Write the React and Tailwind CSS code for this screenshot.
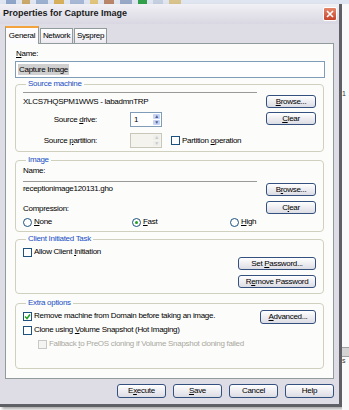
import React from "react";

const U = ({ children }) => <span className="underline underline-offset-1">{children}</span>;

const Button = ({ children, className = "" }) => (
  <button
    className={`h-[13px] rounded-[3px] border border-[#34507e] bg-gradient-to-b from-white to-[#dcdce4] leading-none text-black flex items-center justify-center ${className}`}
  >
    <span className="whitespace-pre">{children}</span>
  </button>
);

const Check = ({ checked = false, disabled = false }) => (
  <span
    className={`w-[9px] h-[9px] border flex items-center justify-center shrink-0 ${
      disabled ? "border-[#c8c8c8] bg-[#f4f4f0]" : "border-[#1c5180] bg-white"
    }`}
  >
    {checked && (
      <svg width="7" height="7" viewBox="0 0 7 7">
        <path d="M1 3.5 L3 5.5 L6 1.5" stroke="#21a121" strokeWidth="1.5" fill="none" />
      </svg>
    )}
  </span>
);

const Radio = ({ checked = false }) => (
  <span className="w-[9px] h-[9px] rounded-full border border-[#1c5180] bg-white flex items-center justify-center shrink-0">
    {checked && <span className="w-[3px] h-[3px] rounded-full bg-[#21a121]" />}
  </span>
);

const Spinner = ({ value = "", disabled = false }) => (
  <div
    className={`w-[32px] h-[15px] border flex items-stretch ${
      disabled ? "border-[#c9c7ba] bg-[#f4f3ee]" : "border-[#7f9db9] bg-white"
    }`}
  >
    <span className="flex-1 pl-[3px] leading-[13px]">{value}</span>
    <span className="w-[9px] flex flex-col gap-px p-px">
      <span
        className={`flex-1 rounded-[1px] flex items-center justify-center text-[5px] leading-none ${
          disabled ? "bg-[#eeeeea] text-[#c8c8c8]" : "bg-[#c6d3f7] text-[#4d6185]"
        }`}
      >
        ▲
      </span>
      <span
        className={`flex-1 rounded-[1px] flex items-center justify-center text-[5px] leading-none ${
          disabled ? "bg-[#eeeeea] text-[#c8c8c8]" : "bg-[#c6d3f7] text-[#4d6185]"
        }`}
      >
        ▼
      </span>
    </span>
  </div>
);

const Group = ({ title, className = "", children }) => (
  <fieldset className={`border border-[#d0d0bf] rounded-[4px] pl-[7px] pr-[7px] ${className}`}>
    <legend className="ml-[3px] px-[2px] leading-[10px] text-[#1a4fc4]">{title}</legend>
    {children}
  </fieldset>
);

const Field = ({ children }) => (
  <div className="w-[234px] h-[17px] border-t border-[#9a9a9a] pt-[2px] leading-[10px] whitespace-nowrap">
    {children}
  </div>
);

export default function App() {
  return (
    <div className="w-[349px] h-[410px] overflow-hidden bg-white flex flex-col font-['Liberation_Sans',Arial,sans-serif] text-[8px] tracking-[-0.3px] text-black">
      {/* desktop toolbar peeking out behind the dialog */}
      <div className="h-[4px] flex gap-[6px] bg-[#dfe6f2] px-[6px]">
        <span className="w-[10px] bg-[#8fa6c9]" />
        <span className="w-[8px] bg-[#c9a86a]" />
        <span className="w-[12px] bg-[#9cb0cf]" />
        <span className="w-[10px] bg-[#d8b05c]" />
        <span className="w-[14px] bg-[#a7b8d6]" />
        <span className="w-[8px] bg-[#e0c47a]" />
        <span className="w-[10px] bg-[#b9866a]" />
        <span className="w-[12px] bg-[#97a9c6]" />
        <span className="w-[9px] bg-[#31a04a]" />
        <span className="w-[10px] bg-[#c4cfe0]" />
        <span className="w-[12px] bg-[#d9c38d]" />
      </div>

      <div className="flex flex-1">
        {/* dialog window */}
        <div className="w-[342px] h-[403px] flex flex-col border-r-[3px] border-b-[3px] border-[#5f5f66] bg-[#dedde6] shadow-[2px_2px_3px_rgba(0,0,0,0.35)]">
          {/* title bar */}
          <div className="h-[20px] flex items-center justify-between pl-[3px] pr-[2px] bg-gradient-to-b from-[#f1f0f5] to-[#d9d8e2]">
            <span className="font-bold text-[9px] tracking-normal text-[#1b1b1b]">
              Properties for Capture Image
            </span>
            <span className="w-[14px] h-[14px] rounded-[2px] border border-white bg-gradient-to-b from-[#e4866a] to-[#c5442a] flex items-center justify-center">
              <svg width="8" height="8" viewBox="0 0 8 8">
                <path d="M1 1 L7 7 M7 1 L1 7" stroke="white" strokeWidth="1.6" />
              </svg>
            </span>
          </div>

          <div className="flex-1 flex flex-col px-[5px]">
            {/* tabs */}
            <div className="h-[19px] flex items-end gap-[1px] pt-[1px]">
              <div className="relative z-10 -mb-px h-[18px] w-[34px] border-x border-t-2 border-x-[#919b9c] border-t-[#f2a33b] bg-[#fcfcfe] flex items-center justify-center">
                General
              </div>
              <div className="h-[15px] w-[33px] border-x border-t border-[#919b9c] bg-gradient-to-b from-white to-[#eceaf0] flex items-center justify-center">
                Network
              </div>
              <div className="h-[15px] w-[33px] border-x border-t border-[#919b9c] bg-gradient-to-b from-white to-[#eceaf0] flex items-center justify-center">
                Sysprep
              </div>
            </div>

            {/* tab page */}
            <div className="h-[336px] border border-[#919b9c] bg-[#fcfcfb] px-[9px] flex flex-col">
              <div className="mt-[5px] leading-[10px] pl-[1px]">
                <U>N</U>ame:
              </div>
              <div className="mt-[2px] h-[17px] w-[310px] border border-[#7f9db9] bg-white flex items-center px-[2px]">
                <span className="bg-[#cfcfcf] px-[1px] leading-[11px]">Capture Image</span>
              </div>

              {/* Source machine */}
              <Group title="Source machine" className="mt-[1px] h-[73px]">
                <div className="flex justify-between items-start pt-[3px]">
                  <div className="flex flex-col">
                    <Field>
                      <span className="block pt-[2px]">XLCS7HQSPM1WWS - labadmnTRP</span>
                    </Field>
                    <div className="flex items-center h-[15px] mt-[3px]">
                      <span className="w-[74px] text-right">
                        Source <U>d</U>rive:
                      </span>
                      <span className="w-[33px]" />
                      <Spinner value="1" />
                    </div>
                    <div className="flex items-center h-[15px] mt-[6px]">
                      <span className="w-[74px] text-right">
                        Source <U>p</U>artition:
                      </span>
                      <span className="w-[33px]" />
                      <Spinner disabled />
                      <span className="ml-[9px] flex items-center gap-[2px]">
                        <Check />
                        <span>
                          Partition <U>o</U>peration
                        </span>
                      </span>
                    </div>
                  </div>
                  <div className="flex flex-col gap-[4px] mt-[3px]">
                    <Button className="w-[50px]">
                      <U>B</U>rowse...
                    </Button>
                    <Button className="w-[50px]">
                      <U>C</U>lear
                    </Button>
                  </div>
                </div>
              </Group>

              {/* Image */}
              <Group title="Image" className="mt-[3px] h-[77px]">
                <div className="flex justify-between items-start">
                  <div className="flex flex-col">
                    <div className="leading-[10px] mt-[1px]">Name:</div>
                    <div className="mt-[5px]">
                      <Field>receptionimage120131.gho</Field>
                    </div>
                    <div className="leading-[10px] mt-[6px]">Compression:</div>
                  </div>
                  <div className="flex flex-col gap-[5px] mt-[18px]">
                    <Button className="w-[50px]">
                      B<U>r</U>owse...
                    </Button>
                    <Button className="w-[50px]">
                      C<U>l</U>ear
                    </Button>
                  </div>
                </div>
                <div className="flex items-center h-[12px] mt-[2px]">
                  <span className="w-[109px] flex items-center gap-[2px]">
                    <Radio />
                    <span>
                      <U>N</U>one
                    </span>
                  </span>
                  <span className="w-[98px] flex items-center gap-[2px]">
                    <Radio checked />
                    <span>
                      <U>F</U>ast
                    </span>
                  </span>
                  <span className="flex items-center gap-[2px]">
                    <Radio />
                    <span>
                      <U>H</U>igh
                    </span>
                  </span>
                </div>
              </Group>

              {/* Client Initiated Task */}
              <Group title="Client Initiated Task" className="mt-[2px] h-[60px]">
                <div className="flex items-center gap-[2px] mt-[3px] leading-[10px]">
                  <Check />
                  <span>
                    Allow Client <U>I</U>nitiation
                  </span>
                </div>
                <div className="flex flex-col items-end gap-[5px]">
                  <Button className="w-[78px]">
                    Set <U>P</U>assword...
                  </Button>
                  <Button className="w-[78px]">
                    R<U>e</U>move Password
                  </Button>
                </div>
              </Group>

              {/* Extra options */}
              <Group title="Extra options" className="mt-[4px] h-[71px]">
                <div className="flex justify-between items-start">
                  <div className="flex flex-col gap-[4px] mt-[3px] whitespace-nowrap">
                    <div className="flex items-center gap-[2px] leading-[10px]">
                      <Check checked />
                      <span>Remove machine from Domain before taking an image.</span>
                    </div>
                    <div className="flex items-center gap-[2px] leading-[10px]">
                      <Check />
                      <span>
                        Clone using <U>V</U>olume Snapshot (Hot Imaging)
                      </span>
                    </div>
                    <div className="flex items-center gap-[2px] leading-[10px] pl-[15px] text-[#a9a99e]">
                      <Check disabled />
                      <span>
                        Fallback <U>t</U>o PreOS cloning if Volume Snapshot cloning failed
                      </span>
                    </div>
                  </div>
                  <Button className="w-[56px] h-[14px] mt-[2px]">
                    <U>A</U>dvanced...
                  </Button>
                </div>
              </Group>
            </div>

            {/* dialog buttons */}
            <div className="flex justify-end gap-[7px] mt-[5px]">
              <Button className="w-[49px] h-[14px]">
                E<U>x</U>ecute
              </Button>
              <Button className="w-[49px] h-[14px]">
                <U>S</U>ave
              </Button>
              <Button className="w-[49px] h-[14px]">Cancel</Button>
              <Button className="w-[49px] h-[14px]">Help</Button>
            </div>
          </div>
        </div>

        {/* desktop behind, right edge */}
        <div className="flex-1 flex flex-col bg-[#fafafa]">
          <div className="h-[86px]" />
          <span className="text-[7px] leading-[8px] text-[#333]">1</span>
          <div className="h-[249px]" />
          <div className="h-[10px] bg-[#d4d4d4] border-y border-[#a0a0a0]" />
          <span className="text-[7px] leading-[8px] text-[#333]">s</span>
        </div>
      </div>
    </div>
  );
}
